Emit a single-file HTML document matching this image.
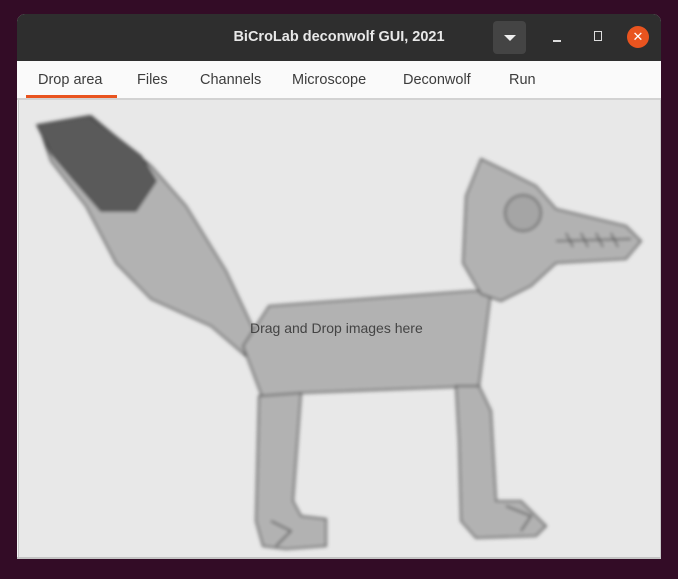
<!DOCTYPE html>
<html><head><meta charset="utf-8"><style>
html,body{margin:0;padding:0;width:678px;height:579px;overflow:hidden;background:#330c26;font-family:"Liberation Sans","DejaVu Sans",sans-serif;}
.win{position:absolute;left:17px;top:14px;width:644px;height:545px;background:#f6f6f6;border-radius:8px 8px 0 0;overflow:hidden;}
.title{position:absolute;left:0;top:0;width:644px;height:47px;background:#2e2e2e;color:#e8e8e8;}
.title .t{position:absolute;left:0;width:100%;top:15px;text-align:center;font-weight:bold;font-size:14.5px;padding-left:0;}
.dd{position:absolute;left:476px;top:7px;width:33px;height:33px;background:#444;border-radius:4px;}
.dd:after{content:"";position:absolute;left:11px;top:14px;border-left:6px solid transparent;border-right:6px solid transparent;border-top:6px solid #eee;}
.min{position:absolute;left:536px;top:26px;width:8px;height:1.5px;background:#ddd;}
.max{position:absolute;left:577px;top:17px;width:6px;height:8px;border:1.5px solid #ddd;}
.cls{position:absolute;left:610px;top:12px;width:22px;height:22px;border-radius:50%;background:#e9541f;color:#fff;font-size:13px;text-align:center;line-height:22px;}
.tabs{position:absolute;left:0;top:47px;width:644px;height:37px;background:#fafafa;border-bottom:2px solid #d2d2d2;}
.tab{position:absolute;top:11px;font-size:14.5px;color:#3c3c3c;}
.ul{position:absolute;left:9px;top:34px;width:91px;height:3px;background:#e9541f;}
.area{position:absolute;left:1px;top:86px;width:641px;height:457px;background:#e8e8e8;border:1px solid #c8c8c8;border-top:none;}
.bot{position:absolute;left:0;top:543px;width:644px;height:2px;background:#c4c4c4;}
.lbl{position:absolute;left:231px;top:220px;font-size:14px;color:#444;}
</style></head><body>
<div class="win">
 <div class="title"><div class="t">BiCroLab deconwolf GUI, 2021</div><div class="dd"></div><div class="min"></div><div class="max"></div><div class="cls">✕</div></div>
 <div class="tabs">
  <div class="tab" style="left:21px">Drop area</div>
  <div class="tab" style="left:120px">Files</div>
  <div class="tab" style="left:183px">Channels</div>
  <div class="tab" style="left:275px">Microscope</div>
  <div class="tab" style="left:386px">Deconwolf</div>
  <div class="tab" style="left:492px">Run</div>
  <div class="ul"></div>
 </div>
 <div class="area">
  <svg width="641" height="457" viewBox="18 99 641 457" style="position:absolute;left:0;top:0">
   <defs><filter id="b"><feGaussianBlur stdDeviation="1.8"/></filter></defs>
   <g filter="url(#b)" stroke="#444" stroke-width="1.6" fill="#b2b2b2">
    <path d="M38 125 L90 115 L150 165 L185 205 L225 270 L258 340 L245 355 L210 325 L150 298 L115 262 L85 205 L50 160 Z"/>
    <path d="M36 124 L88 115 L140 155 L155 180 L135 210 L100 210 L72 178 L50 152 Z" fill="#5a5a5a"/>
    <path d="M242 345 L268 305 L470 290 L490 290 L478 385 L300 392 L262 398 Z"/>
    <path d="M258 395 L300 392 L292 500 L300 515 L325 518 L325 545 L285 548 L262 545 L255 520 Z"/>
    <path d="M455 385 L478 385 L490 410 L495 500 L520 500 L545 525 L535 535 L475 537 L460 520 L458 440 Z"/>
    <path d="M480 158 L465 195 L462 262 L480 293 L500 300 L530 285 L555 262 L625 258 L640 240 L625 225 L555 208 L535 185 L505 170 Z"/>
    <circle cx="522" cy="212" r="18" fill="#a5a5a5" stroke-width="1.5"/>
    <path d="M555 240 L630 238 M565 232 L572 246 M580 232 L587 246 M595 232 L602 246 M610 232 L617 246" stroke-width="1.4" fill="none"/>
    <path d="M270 520 L290 530 L275 545 M505 505 L530 515 L520 530" fill="none"/>
   </g>
  </svg>
  <div class="lbl">Drag and Drop images here</div>
 </div>
 <div class="bot"></div>
</div>
</body></html>
